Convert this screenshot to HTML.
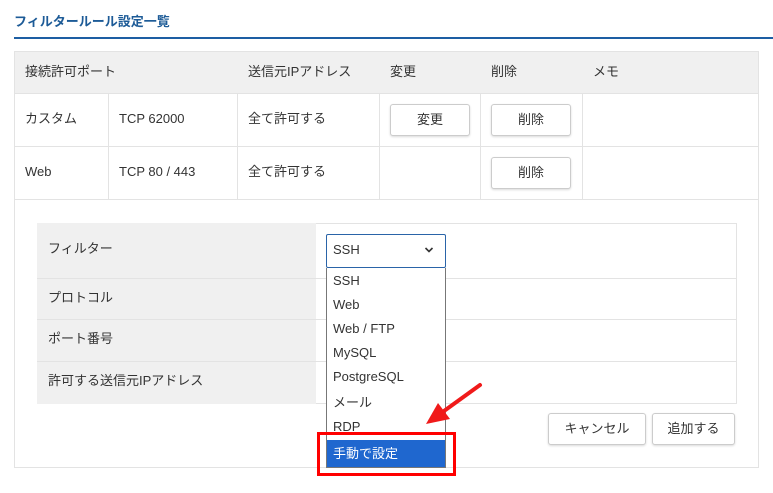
<!DOCTYPE html>
<html><head><meta charset="utf-8"><style>
*{margin:0;padding:0;box-sizing:border-box}
body{width:773px;height:493px;background:#fff;font-family:"Liberation Sans","Noto Sans CJK JP",sans-serif;font-size:13px;line-height:17px;color:#333;position:relative;overflow:hidden}
.a{position:absolute}
.t{white-space:nowrap;line-height:17px}
.btn{position:absolute;background:#fff;border:1px solid #ccc;border-radius:3px;box-shadow:0 1px 2px rgba(0,0,0,.15);text-align:center;font-size:13px;color:#333}
</style></head><body>
<div class="a t" style="left:14px;top:13px;font-size:13px;font-weight:bold;color:#1d5b97">フィルタールール設定一覧</div>
<div class="a" style="left:14px;top:37px;width:759px;height:2px;background:#1d5ea3"></div>

<div class="a" style="left:14px;top:51px;width:745px;height:417px;border:1px solid #e3e3e3"></div>
<div class="a" style="left:14px;top:51px;width:745px;height:43px;background:#f0f0f0;border:1px solid #e3e3e3"></div>
<div class="a" style="left:14px;top:146px;width:745px;height:1px;background:#e3e3e3"></div>
<div class="a" style="left:14px;top:199px;width:745px;height:1px;background:#e3e3e3"></div>
<div class="a" style="left:108px;top:94px;width:1px;height:106px;background:#e3e3e3"></div>
<div class="a" style="left:237px;top:94px;width:1px;height:106px;background:#e3e3e3"></div>
<div class="a" style="left:379px;top:94px;width:1px;height:106px;background:#e3e3e3"></div>
<div class="a" style="left:480px;top:94px;width:1px;height:106px;background:#e3e3e3"></div>
<div class="a" style="left:582px;top:94px;width:1px;height:106px;background:#e3e3e3"></div>

<div class="a t" style="left:25px;top:63px">接続許可ポート</div>
<div class="a t" style="left:248px;top:63px">送信元IPアドレス</div>
<div class="a t" style="left:390px;top:63px">変更</div>
<div class="a t" style="left:491px;top:63px">削除</div>
<div class="a t" style="left:593px;top:63px">メモ</div>

<div class="a t" style="left:25px;top:110px">カスタム</div>
<div class="a t" style="left:119px;top:110px">TCP 62000</div>
<div class="a t" style="left:248px;top:110px">全て許可する</div>
<div class="btn" style="left:390px;top:104px;width:80px;height:32px;line-height:30px">変更</div>
<div class="btn" style="left:491px;top:104px;width:80px;height:32px;line-height:30px">削除</div>

<div class="a t" style="left:25px;top:163px">Web</div>
<div class="a t" style="left:119px;top:163px">TCP 80 / 443</div>
<div class="a t" style="left:248px;top:163px">全て許可する</div>
<div class="btn" style="left:491px;top:157px;width:80px;height:32px;line-height:30px">削除</div>

<div class="a" style="left:37px;top:223px;width:700px;height:181px;border:1px solid #e3e3e3"></div>
<div class="a" style="left:37px;top:223px;width:279px;height:181px;background:#f0f0f0"></div>
<div class="a" style="left:37px;top:278px;width:700px;height:1px;background:#e3e3e3"></div>
<div class="a" style="left:37px;top:319px;width:700px;height:1px;background:#e3e3e3"></div>
<div class="a" style="left:37px;top:361px;width:700px;height:1px;background:#e3e3e3"></div>
<div class="a t" style="left:48px;top:240px">フィルター</div>
<div class="a t" style="left:48px;top:289px">プロトコル</div>
<div class="a t" style="left:48px;top:330px">ポート番号</div>
<div class="a t" style="left:48px;top:372px">許可する送信元IPアドレス</div>

<div class="btn" style="left:548px;top:413px;width:98px;height:32px;line-height:30px">キャンセル</div>
<div class="btn" style="left:652px;top:413px;width:83px;height:32px;line-height:30px">追加する</div>

<div class="a" style="left:326px;top:234px;width:120px;height:34px;border:1px solid #2a64a8;border-radius:2px;background:#fff"></div>
<div class="a t" style="left:333px;top:241px">SSH</div>
<svg class="a" style="left:424px;top:246px" width="10" height="8"><path d="M1.5 2 L5 5.5 L8.5 2" stroke="#333" stroke-width="1.6" fill="none"/></svg>
<div class="a" style="left:326px;top:268px;width:120px;height:200px;border:1px solid #777;border-top:none;background:#fff"></div>
<div class="a t" style="left:333px;top:272px">SSH</div>
<div class="a t" style="left:333px;top:296px">Web</div>
<div class="a t" style="left:333px;top:320px">Web / FTP</div>
<div class="a t" style="left:333px;top:344px">MySQL</div>
<div class="a t" style="left:333px;top:368px">PostgreSQL</div>
<div class="a t" style="left:333px;top:394px">メール</div>
<div class="a t" style="left:333px;top:418px">RDP</div>
<div class="a" style="left:327px;top:440px;width:118px;height:27px;background:#1f67cf"></div>
<div class="a t" style="left:333px;top:445px;color:#fff">手動で設定</div>
<div class="a" style="left:317px;top:432px;width:139px;height:44px;border:3px solid #f00"></div>
<svg class="a" style="left:420px;top:380px" width="70" height="50"><path d="M60 5 L24 31" stroke="#f01a1a" stroke-width="4" stroke-linecap="round"/><path d="M6 44 L18 23 L30 39 Z" fill="#f01a1a"/></svg>
</body></html>
